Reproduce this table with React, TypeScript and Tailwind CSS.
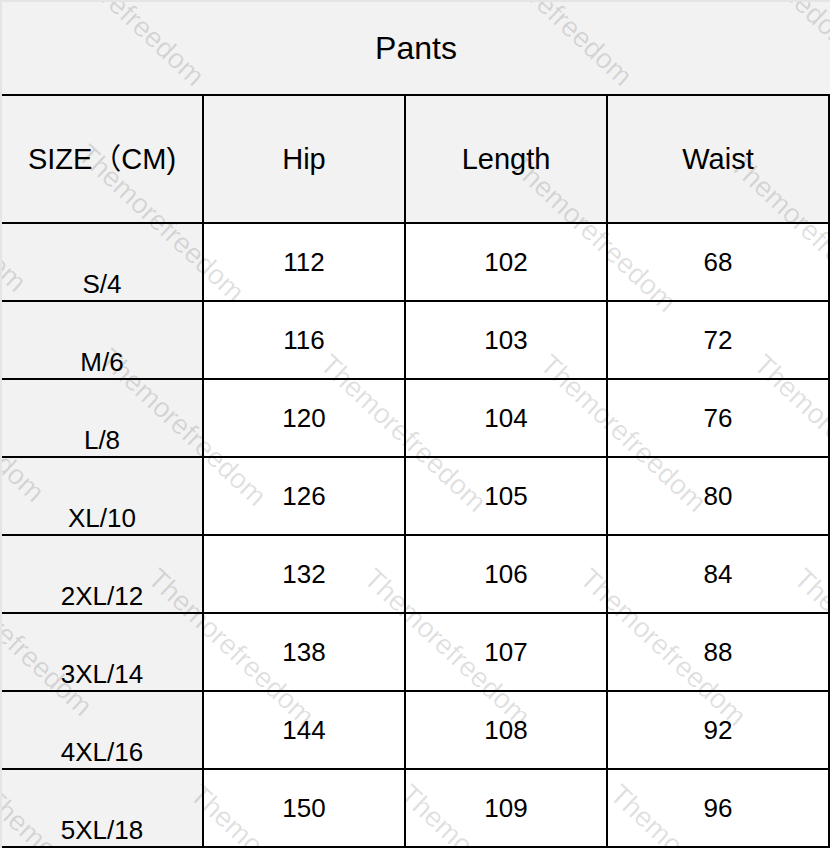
import React from "react";

const rows = [
  ["S/4", "112", "102", "68"],
  ["M/6", "116", "103", "72"],
  ["L/8", "120", "104", "76"],
  ["XL/10", "126", "105", "80"],
  ["2XL/12", "132", "106", "84"],
  ["3XL/14", "138", "107", "88"],
  ["4XL/16", "144", "108", "92"],
  ["5XL/18", "150", "109", "96"],
];

const marks = [
  "left-[50px] top-[-78px]",
  "left-[478px] top-[-78px]",
  "left-[700px] top-[-112px]",
  "left-[-128px] top-[128px]",
  "left-[90px] top-[138px]",
  "left-[522px] top-[148px]",
  "left-[742px] top-[148px]",
  "left-[-110px] top-[338px]",
  "left-[112px] top-[342px]",
  "left-[332px] top-[348px]",
  "left-[552px] top-[348px]",
  "left-[766px] top-[348px]",
  "left-[-62px] top-[552px]",
  "left-[160px] top-[562px]",
  "left-[376px] top-[562px]",
  "left-[592px] top-[562px]",
  "left-[806px] top-[562px]",
  "left-[-4px] top-[782px]",
  "left-[202px] top-[778px]",
  "left-[412px] top-[778px]",
  "left-[622px] top-[778px]",
];

export default function App() {
  return (
    <div
      className="relative w-[830px] h-[848px] overflow-hidden border-t-2 border-l-2 border-[#e5e5e5] bg-[#f2f2f2] text-black"
      style={{ fontFamily: '"Liberation Sans", Arial, "Noto Sans CJK SC", sans-serif' }}
    >
      <div className="h-[92px] flex items-center justify-center text-[32px] leading-none">Pants</div>
      <div className="grid grid-cols-[200px_200px_200px_220px] grid-rows-[126px_repeat(8,76px)] gap-[2px] bg-black border-t-2 border-r-2 border-b-2 border-black w-[828px]">
        {["SIZE（CM)", "Hip", "Length", "Waist"].map((h) => (
          <div key={h} className="bg-[#f2f2f2] flex items-center justify-center text-[29px] leading-none">
            {h}
          </div>
        ))}
        {rows.map((r) => (
          <React.Fragment key={r[0]}>
            <div className="bg-[#f2f2f2] flex items-end justify-center pb-[3px] text-[26px] leading-none">{r[0]}</div>
            <div className="bg-white flex items-center justify-center text-[26px] leading-none">{r[1]}</div>
            <div className="bg-white flex items-center justify-center text-[26px] leading-none">{r[2]}</div>
            <div className="bg-white flex items-center justify-center text-[26px] leading-none">{r[3]}</div>
          </React.Fragment>
        ))}
      </div>
      <div className="absolute inset-0 pointer-events-none">
        {marks.map((m, i) => (
          <span
            key={i}
            className={`absolute ${m} origin-top-left rotate-[43deg] text-[28px] leading-none whitespace-nowrap text-black/[0.12]`}
          >
            Themorefreedom
          </span>
        ))}
      </div>
    </div>
  );
}
